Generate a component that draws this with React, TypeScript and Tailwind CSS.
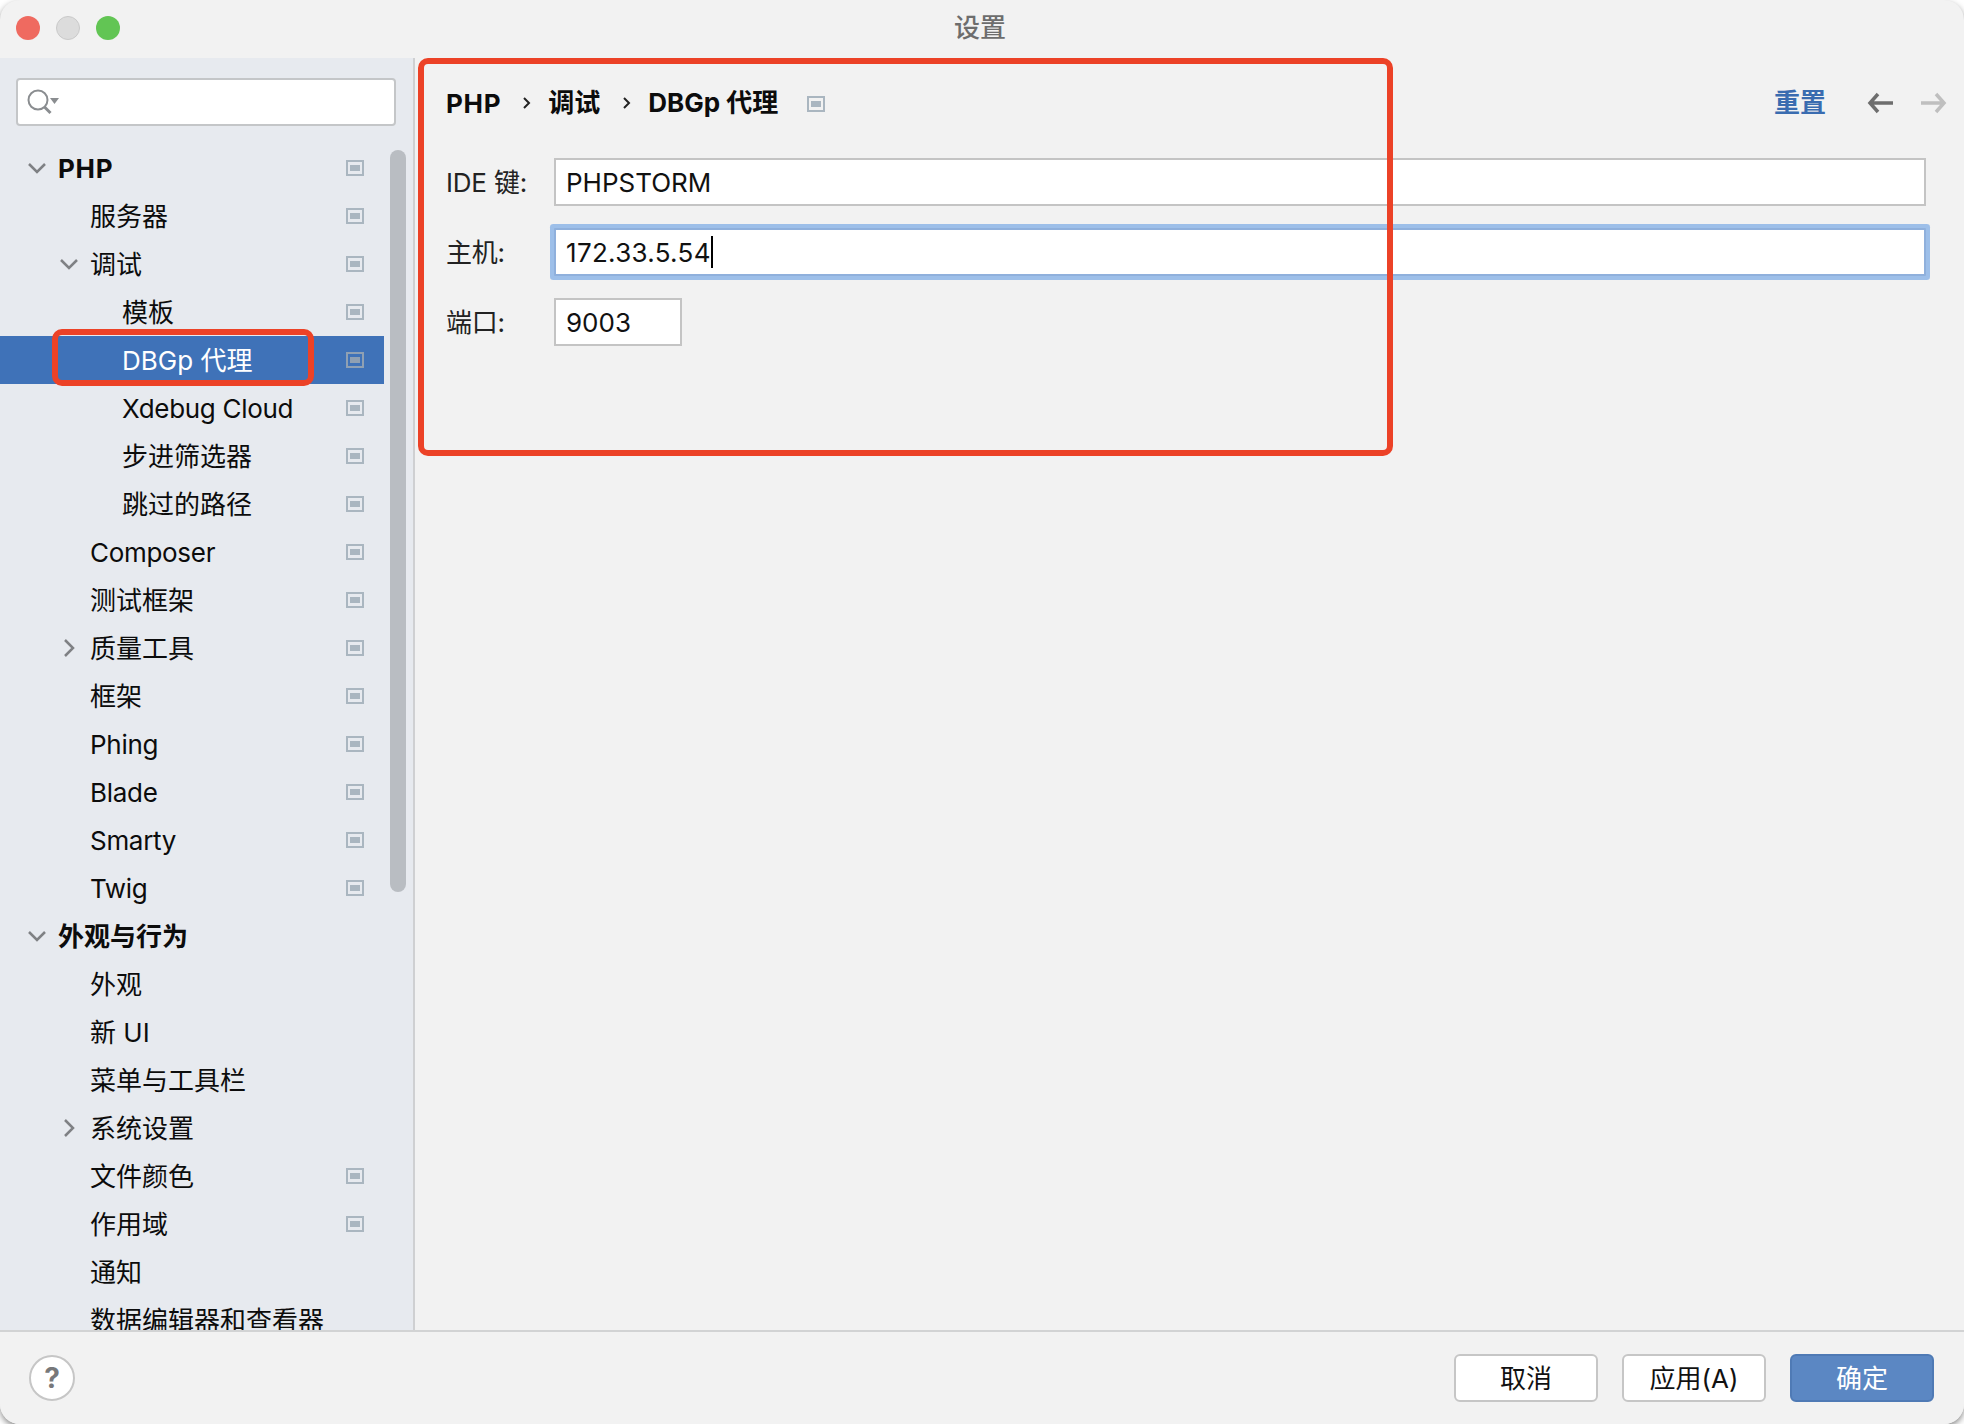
import React from 'react';

const FONT = '"Inter", "Noto Sans CJK SC", sans-serif';

type Row = { label: string; level: number; arrow?: 'open' | 'closed'; icon?: boolean; bold?: boolean; selected?: boolean; latin?: boolean; wide?: boolean };

const rows: Row[] = [
    { label: 'PHP', level: 0, arrow: 'open', icon: true, bold: true, wide: true },
    { label: '服务器', level: 1, icon: true },
    { label: '调试', level: 1, arrow: 'open', icon: true },
    { label: '模板', level: 2, icon: true },
    { label: 'DBGp 代理', level: 2, icon: true, selected: true },
    { label: 'Xdebug Cloud', level: 2, icon: true, latin: true },
    { label: '步进筛选器', level: 2, icon: true },
    { label: '跳过的路径', level: 2, icon: true },
    { label: 'Composer', level: 1, icon: true, latin: true },
    { label: '测试框架', level: 1, icon: true },
    { label: '质量工具', level: 1, arrow: 'closed', icon: true },
    { label: '框架', level: 1, icon: true },
    { label: 'Phing', level: 1, icon: true, latin: true },
    { label: 'Blade', level: 1, icon: true, latin: true },
    { label: 'Smarty', level: 1, icon: true, latin: true },
    { label: 'Twig', level: 1, icon: true, latin: true },
    { label: '外观与行为', level: 0, arrow: 'open', bold: true },
    { label: '外观', level: 1 },
    { label: '新 UI', level: 1 },
    { label: '菜单与工具栏', level: 1 },
    { label: '系统设置', level: 1, arrow: 'closed' },
    { label: '文件颜色', level: 1, icon: true },
    { label: '作用域', level: 1, icon: true },
    { label: '通知', level: 1 },
    { label: '数据编辑器和查看器', level: 1 },
];

// project-scope marker shown next to settings
function ScopeIcon({ dark }: { dark?: boolean }) {
    const c = dark ? '#8fa0b3' : '#aab6c0';
    return (
        <svg width="18" height="16" viewBox="0 0 18 16" className="shrink-0">
            <rect x="1" y="1" width="16" height="14" fill="none" stroke={c} strokeWidth="2" />
            <rect x="4" y="5" width="10" height="6" fill={c} />
        </svg>
    );
}

function TreeArrow({ open }: { open: boolean }) {
    return (
        <svg width="18" height="18" viewBox="0 0 18 18" fill="none" stroke="#7f8184" strokeWidth="2.500" className="shrink-0">
            {open ? <path d="M1 5l8 8 8-8" /> : <path d="M5 1l8 8-8 8" />}
        </svg>
    );
}

function TreeRow({ row }: { row: Row }) {
    const left = row.level === 0 ? 'pl-[58px]' : row.level === 1 ? 'pl-[90px]' : 'pl-[122px]';
    const arrowLeft = row.level === 0 ? 'left-[28px]' : 'left-[60px]';
    return (
        <div className={`relative flex h-12 w-[384px] shrink-0 items-center pr-5 text-[26px] leading-none ${left} ${row.selected ? 'bg-[#3f72b8] text-white' : 'text-[#0c0c0c]'}`}>
            {row.arrow && (
                <span className={`absolute top-[15px] ${arrowLeft}`}>
                    <TreeArrow open={row.arrow === 'open'} />
                </span>
            )}
            <span className={`flex-1 whitespace-nowrap pt-[2px] ${row.bold ? 'font-bold' : ''} ${row.latin ? 'tracking-[-0.3px]' : ''} ${row.wide ? 'tracking-[0.7px]' : ''}`}>{row.label}</span>
            {row.icon && <ScopeIcon dark={row.selected} />}
        </div>
    );
}

function Sidebar() {
    return (
        <aside className="relative flex h-full w-[415px] shrink-0 flex-col overflow-hidden border-r-2 border-[#cfd0d2] bg-[#e7eaef]">
            <div className="mx-4 mt-5 flex h-12 w-[380px] shrink-0 items-center rounded-[4px] border-2 border-[#c4c6c8] bg-white pl-2">
                <svg width="34" height="28" viewBox="0 0 34 28" fill="none">
                    <circle cx="12" cy="12" r="9.5" stroke="#8a8d90" strokeWidth="2" />
                    <path d="M18.5 19l6 6" stroke="#8a8d90" strokeWidth="3" />
                    <path d="M24 10h9l-4.500 6z" fill="#8a8d90" />
                </svg>
            </div>
            <div className="mt-[18px] flex flex-col">
                {rows.map((r) => (
                    <TreeRow key={r.label} row={r} />
                ))}
            </div>
            <div className="absolute left-[390px] top-[92px] h-[742px] w-4 rounded-full bg-[#b9bdc2]" />
        </aside>
    );
}

function Crumb() {
    return (
        <svg width="10" height="14" viewBox="0 0 10 14" fill="none" stroke="#222" strokeWidth="2" className="shrink-0">
            <path d="M2 2l5 5-5 5" />
        </svg>
    );
}

function Field({ label, value, focused, narrow, spaced }: { label: string; value: string; focused?: boolean; narrow?: boolean; spaced?: boolean }) {
    return (
        <div className="flex h-12 items-center text-[26px] leading-none text-[#111]">
            <span className="w-[108px] shrink-0 whitespace-nowrap pt-[2px] tracking-[-0.2px] text-[#222]">{label}</span>
            <div
                className={`flex h-12 items-center bg-white pl-[10px] ${narrow ? 'w-[128px]' : 'flex-1'} ${
                    focused
                        ? 'rounded-[1px] border-2 border-[#8fb0dc] shadow-[0_0_0_4px_#9dbfe9]'
                        : 'border-2 border-[#c4c4c4]'
                }`}
            >
                <span className={`pt-[2px] ${spaced ? 'tracking-[0.3px]' : ''}`}>{value}</span>
                {focused && <span className="h-8 w-[2px] bg-black" />}
            </div>
        </div>
    );
}

function Content() {
    return (
        <main className="relative flex flex-1 flex-col pl-[31px] pr-[38px]">
            <div className="flex h-[100px] shrink-0 items-center pb-[10px] text-[26px] font-bold leading-none text-[#0c0c0c]">
                <span className="pt-[2px] tracking-[0.7px]">PHP</span>
                <span className="ml-[21px] mr-4"><Crumb /></span>
                <span>调试</span>
                <span className="ml-[22px] mr-4"><Crumb /></span>
                <span>DBGp 代理</span>
                <span className="ml-[29px] mt-[2px]"><ScopeIcon /></span>
                <span className="ml-auto text-[#3a6cb0]">重置</span>
                <svg width="26" height="22" viewBox="0 0 26 22" fill="none" stroke="#6e6e6e" strokeWidth="3.500" className="ml-[41px] shrink-0">
                    <path d="M26 11H3M11 2l-8 9 8 9" />
                </svg>
                <svg width="26" height="22" viewBox="0 0 26 22" fill="none" stroke="#bfbfbf" strokeWidth="3.500" className="ml-7 mr-[-21px] shrink-0">
                    <path d="M0 11h23M15 2l8 9-8 9" />
                </svg>
            </div>
            <div className="flex flex-col gap-[22px]">
                <Field label="IDE 键:" value="PHPSTORM" />
                <Field label="主机:" value="172.33.5.54" focused spaced />
                <Field label="端口:" value="9003" narrow />
            </div>
        </main>
    );
}

function Footer() {
    return (
        <footer className="flex h-[94px] shrink-0 items-center border-t-2 border-[#d2d3d4] bg-[#f2f2f2] pl-[29px] pr-[30px]">
            <div className="flex h-[46px] w-[46px] items-center justify-center rounded-full border-2 border-[#c6c6c6] bg-white text-[28px] font-bold leading-none text-[#77787a]">?</div>
            <div className="ml-auto flex gap-6 text-[26px] leading-none">
                <button className="h-12 w-[144px] rounded-[6px] border-2 border-[#c6c6c6] bg-white pt-[2px] text-[#111]">取消</button>
                <button className="h-12 w-[144px] rounded-[6px] border-2 border-[#c6c6c6] bg-white pt-[2px] text-[#111]">应用(A)</button>
                <button className="h-12 w-[144px] rounded-[6px] border-2 border-[#4f7ab5] bg-[#5b87c3] pt-[2px] text-white">确定</button>
            </div>
        </footer>
    );
}

export default function App() {
    return (
        <div className="h-[1424px] w-[1964px] bg-white" style={{ fontFamily: FONT }}>
            <div className="relative flex h-full w-full flex-col overflow-hidden rounded-[20px] bg-[#f2f2f2] shadow-[0_3px_6px_rgba(0,0,0,0.45)]">
                {/* title bar */}
                <header className="relative flex h-[58px] shrink-0 items-center justify-center pb-[2px] pr-1 text-[26px] font-medium leading-none text-[#6d6d6d]">
                    <div className="absolute left-4 flex gap-4">
                        <span className="h-6 w-6 rounded-full bg-[#ef6a60]" />
                        <span className="h-6 w-6 rounded-full border border-[#c9c9c9] bg-[#dcdcdc]" />
                        <span className="h-6 w-6 rounded-full bg-[#62c554]" />
                    </div>
                    <span>设置</span>
                </header>

                <div className="flex min-h-0 flex-1">
                    <Sidebar />
                    <Content />
                </div>

                <Footer />

                {/* red annotation boxes */}
                <div className="absolute left-[418px] top-[58px] h-[398px] w-[975px] rounded-[10px] border-[6px] border-[#ec4227]" />
                <div className="absolute left-[52px] top-[329px] h-[57px] w-[262px] rounded-[10px] border-[6px] border-[#ec4227]" />
            </div>
        </div>
    );
}
